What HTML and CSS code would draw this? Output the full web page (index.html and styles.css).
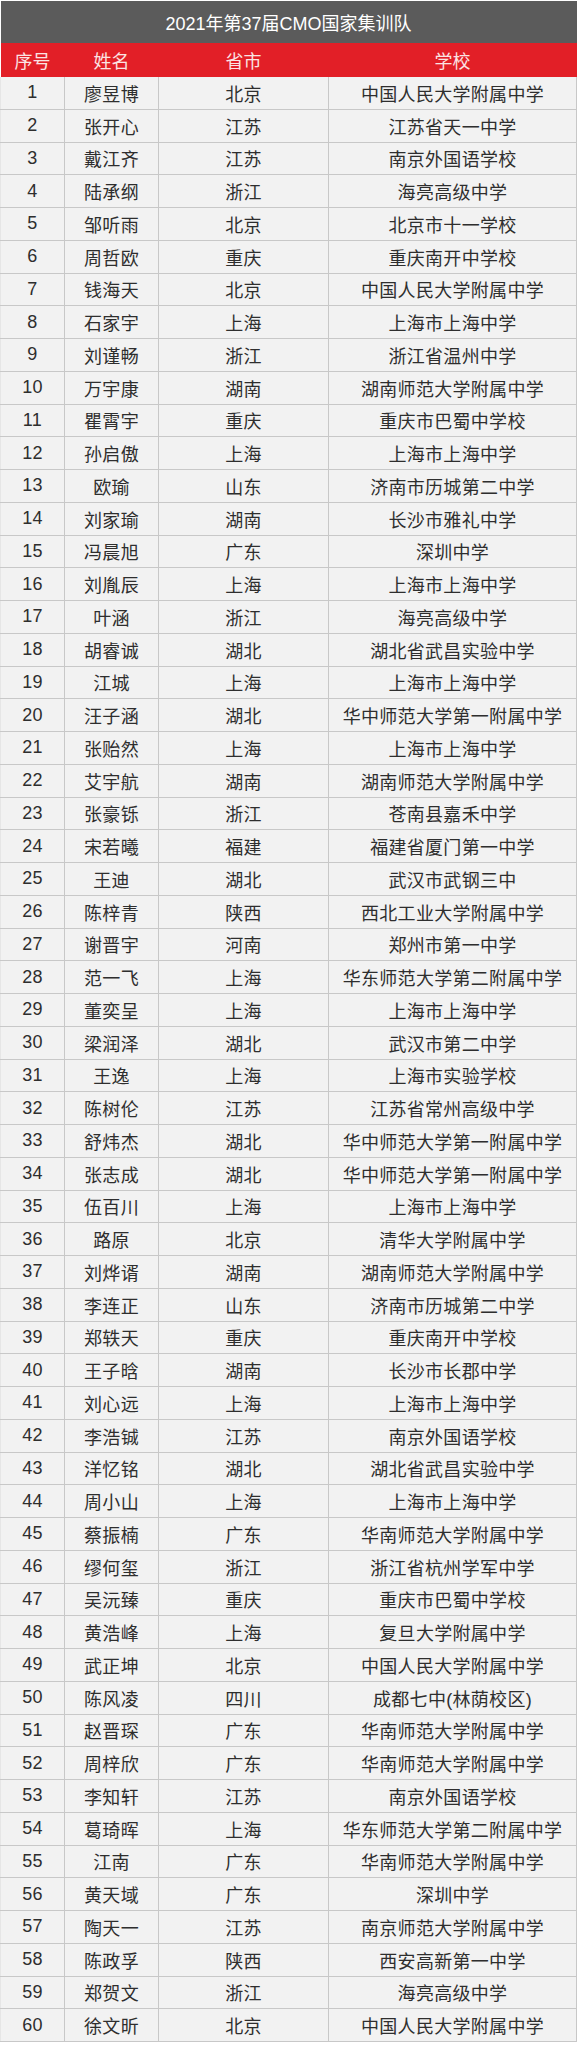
FILE: index.html
```html
<!DOCTYPE html>
<html lang="zh-CN">
<head>
<meta charset="utf-8">
<title>2021年第37届CMO国家集训队</title>
<link rel="stylesheet" href="styles.css">
</head>
<body>
<table class="roster">
<colgroup>
<col class="c-no"><col class="c-name"><col class="c-prov"><col class="c-school">
</colgroup>
<thead>
<tr class="title"><th colspan="4">2021年第37届CMO国家集训队</th></tr>
<tr class="head"><th>序号</th><th>姓名</th><th>省市</th><th>学校</th></tr>
</thead>
<tbody>
<tr><td>1</td><td>廖昱博</td><td>北京</td><td>中国人民大学附属中学</td></tr>
<tr><td>2</td><td>张开心</td><td>江苏</td><td>江苏省天一中学</td></tr>
<tr><td>3</td><td>戴江齐</td><td>江苏</td><td>南京外国语学校</td></tr>
<tr><td>4</td><td>陆承纲</td><td>浙江</td><td>海亮高级中学</td></tr>
<tr><td>5</td><td>邹听雨</td><td>北京</td><td>北京市十一学校</td></tr>
<tr><td>6</td><td>周哲欧</td><td>重庆</td><td>重庆南开中学校</td></tr>
<tr><td>7</td><td>钱海天</td><td>北京</td><td>中国人民大学附属中学</td></tr>
<tr><td>8</td><td>石家宇</td><td>上海</td><td>上海市上海中学</td></tr>
<tr><td>9</td><td>刘谨畅</td><td>浙江</td><td>浙江省温州中学</td></tr>
<tr><td>10</td><td>万宇康</td><td>湖南</td><td>湖南师范大学附属中学</td></tr>
<tr><td>11</td><td>瞿霄宇</td><td>重庆</td><td>重庆市巴蜀中学校</td></tr>
<tr><td>12</td><td>孙启傲</td><td>上海</td><td>上海市上海中学</td></tr>
<tr><td>13</td><td>欧瑜</td><td>山东</td><td>济南市历城第二中学</td></tr>
<tr><td>14</td><td>刘家瑜</td><td>湖南</td><td>长沙市雅礼中学</td></tr>
<tr><td>15</td><td>冯晨旭</td><td>广东</td><td>深圳中学</td></tr>
<tr><td>16</td><td>刘胤辰</td><td>上海</td><td>上海市上海中学</td></tr>
<tr><td>17</td><td>叶涵</td><td>浙江</td><td>海亮高级中学</td></tr>
<tr><td>18</td><td>胡睿诚</td><td>湖北</td><td>湖北省武昌实验中学</td></tr>
<tr><td>19</td><td>江城</td><td>上海</td><td>上海市上海中学</td></tr>
<tr><td>20</td><td>汪子涵</td><td>湖北</td><td>华中师范大学第一附属中学</td></tr>
<tr><td>21</td><td>张贻然</td><td>上海</td><td>上海市上海中学</td></tr>
<tr><td>22</td><td>艾宇航</td><td>湖南</td><td>湖南师范大学附属中学</td></tr>
<tr><td>23</td><td>张豪铄</td><td>浙江</td><td>苍南县嘉禾中学</td></tr>
<tr><td>24</td><td>宋若曦</td><td>福建</td><td>福建省厦门第一中学</td></tr>
<tr><td>25</td><td>王迪</td><td>湖北</td><td>武汉市武钢三中</td></tr>
<tr><td>26</td><td>陈梓青</td><td>陕西</td><td>西北工业大学附属中学</td></tr>
<tr><td>27</td><td>谢晋宇</td><td>河南</td><td>郑州市第一中学</td></tr>
<tr><td>28</td><td>范一飞</td><td>上海</td><td>华东师范大学第二附属中学</td></tr>
<tr><td>29</td><td>董奕呈</td><td>上海</td><td>上海市上海中学</td></tr>
<tr><td>30</td><td>梁润泽</td><td>湖北</td><td>武汉市第二中学</td></tr>
<tr><td>31</td><td>王逸</td><td>上海</td><td>上海市实验学校</td></tr>
<tr><td>32</td><td>陈树伦</td><td>江苏</td><td>江苏省常州高级中学</td></tr>
<tr><td>33</td><td>舒炜杰</td><td>湖北</td><td>华中师范大学第一附属中学</td></tr>
<tr><td>34</td><td>张志成</td><td>湖北</td><td>华中师范大学第一附属中学</td></tr>
<tr><td>35</td><td>伍百川</td><td>上海</td><td>上海市上海中学</td></tr>
<tr><td>36</td><td>路原</td><td>北京</td><td>清华大学附属中学</td></tr>
<tr><td>37</td><td>刘烨谞</td><td>湖南</td><td>湖南师范大学附属中学</td></tr>
<tr><td>38</td><td>李连正</td><td>山东</td><td>济南市历城第二中学</td></tr>
<tr><td>39</td><td>郑轶天</td><td>重庆</td><td>重庆南开中学校</td></tr>
<tr><td>40</td><td>王子晗</td><td>湖南</td><td>长沙市长郡中学</td></tr>
<tr><td>41</td><td>刘心远</td><td>上海</td><td>上海市上海中学</td></tr>
<tr><td>42</td><td>李浩铖</td><td>江苏</td><td>南京外国语学校</td></tr>
<tr><td>43</td><td>洋忆铭</td><td>湖北</td><td>湖北省武昌实验中学</td></tr>
<tr><td>44</td><td>周小山</td><td>上海</td><td>上海市上海中学</td></tr>
<tr><td>45</td><td>蔡振楠</td><td>广东</td><td>华南师范大学附属中学</td></tr>
<tr><td>46</td><td>缪何玺</td><td>浙江</td><td>浙江省杭州学军中学</td></tr>
<tr><td>47</td><td>吴沅臻</td><td>重庆</td><td>重庆市巴蜀中学校</td></tr>
<tr><td>48</td><td>黄浩峰</td><td>上海</td><td>复旦大学附属中学</td></tr>
<tr><td>49</td><td>武正坤</td><td>北京</td><td>中国人民大学附属中学</td></tr>
<tr><td>50</td><td>陈风凌</td><td>四川</td><td>成都七中(林荫校区)</td></tr>
<tr><td>51</td><td>赵晋琛</td><td>广东</td><td>华南师范大学附属中学</td></tr>
<tr><td>52</td><td>周梓欣</td><td>广东</td><td>华南师范大学附属中学</td></tr>
<tr><td>53</td><td>李知轩</td><td>江苏</td><td>南京外国语学校</td></tr>
<tr><td>54</td><td>葛琦晖</td><td>上海</td><td>华东师范大学第二附属中学</td></tr>
<tr><td>55</td><td>江南</td><td>广东</td><td>华南师范大学附属中学</td></tr>
<tr><td>56</td><td>黄天域</td><td>广东</td><td>深圳中学</td></tr>
<tr><td>57</td><td>陶天一</td><td>江苏</td><td>南京师范大学附属中学</td></tr>
<tr><td>58</td><td>陈政孚</td><td>陕西</td><td>西安高新第一中学</td></tr>
<tr><td>59</td><td>郑贺文</td><td>浙江</td><td>海亮高级中学</td></tr>
<tr><td>60</td><td>徐文昕</td><td>北京</td><td>中国人民大学附属中学</td></tr>
</tbody>
</table>
</body>
</html>
```
FILE: styles.css
```css
html, body {
  margin: 0;
  padding: 0;
  background: #ffffff;
}
body {
  padding-top: 1px;
  font-family: "Liberation Sans", "Noto Sans CJK SC", sans-serif;
}
.roster {
  width: 576px;
  border-collapse: collapse;
  table-layout: fixed;
}
.c-no { width: 64px; }
.c-name { width: 94px; }
.c-prov { width: 170px; }
.c-school { width: 248px; }

.title th {
  height: 42px;
  padding: 0;
  background: #5b5b5b;
  color: #ffffff;
  font-size: 18px;
  font-weight: normal;
  text-align: center;
  vertical-align: middle;
}
.head th {
  height: 34px;
  padding: 0;
  background: #e21f27;
  color: #fbe3e3;
  font-size: 18px;
  font-weight: normal;
  text-align: center;
  vertical-align: middle;
}
.roster tbody td {
  height: 31.75px;
  padding: 0;
  background: #f2f2f2;
  border: 1px solid #c8c8c8;
  border-top: none;
  color: #2e2e2e;
  font-size: 18px;
  letter-spacing: 0.3px;
  text-align: center;
  vertical-align: middle;
  white-space: nowrap;
}
.roster tbody td:first-child {
  border-left: 1px solid #e6e6e6;
}
```
